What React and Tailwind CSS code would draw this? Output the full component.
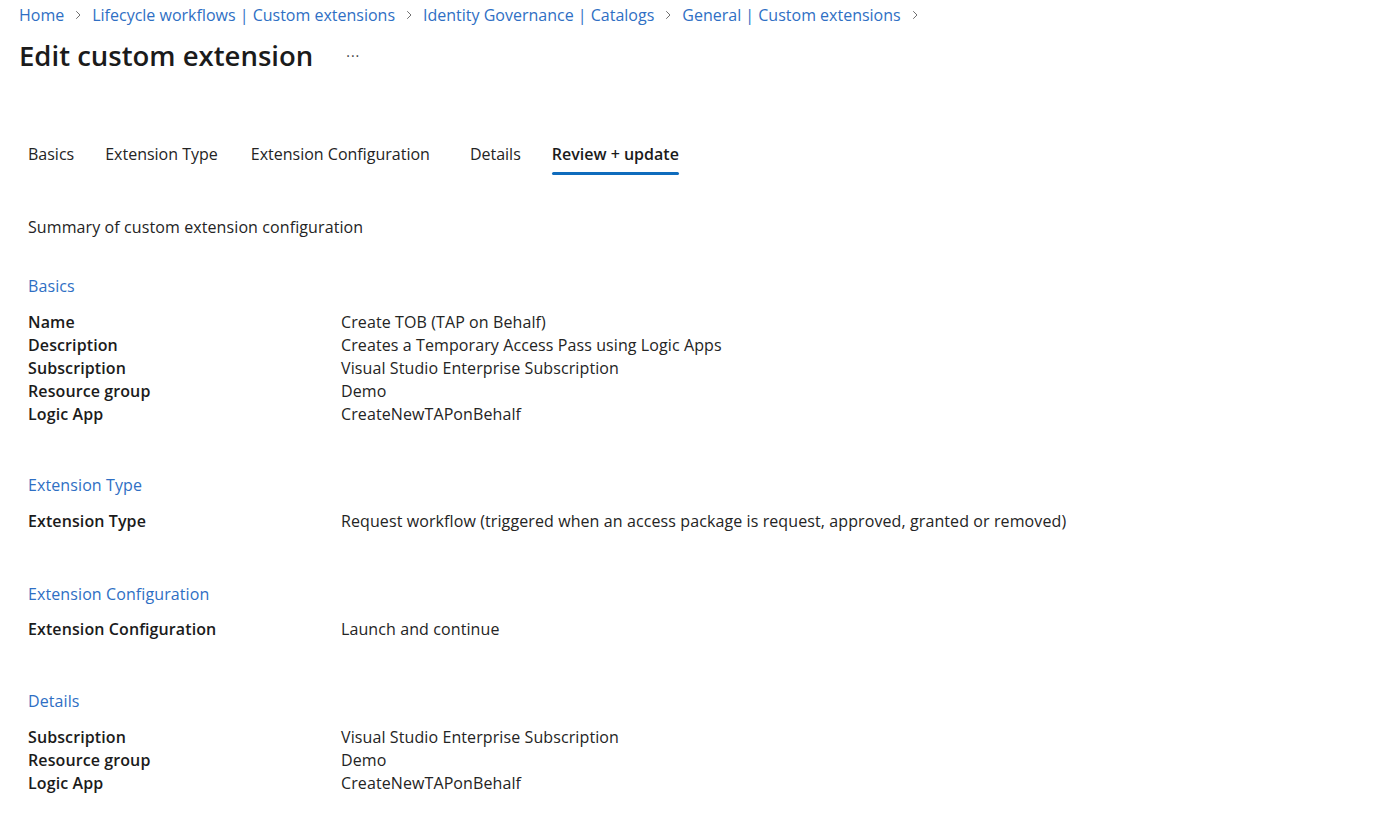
import React from "react";

const font = { fontFamily: '"Open Sans", "Noto Sans", sans-serif' };

function Chevron() {
  return (
    <svg width="12" height="12" viewBox="0 0 12 12" className="mx-[8px] shrink-0" fill="none">
      <path d="M4.5 2.5 L8 6 L4.5 9.5" stroke="#707070" strokeWidth="1" strokeLinecap="round" strokeLinejoin="round" />
    </svg>
  );
}

const crumbs = [
  "Home",
  "Lifecycle workflows | Custom extensions",
  "Identity Governance | Catalogs",
  "General | Custom extensions",
];

const tabs = [
  { label: "Basics", w: "mr-[31px]" },
  { label: "Extension Type", w: "mr-[33px]" },
  { label: "Extension Configuration", w: "mr-[40px]" },
  { label: "Details", w: "mr-[31px]" },
  { label: "Review + update", active: true },
];

function Section({ title, rows, className = "", gap = "mt-[14px]" }) {
  return (
    <div className={className}>
      <div className="text-[16px] leading-[22px] tracking-[0.1px] text-[#2f6fc4]">{title}</div>
      <div className={gap}>
        {rows.map(([k, v]) => (
          <div key={k} className="flex text-[16px] leading-[23px] tracking-[0.1px]">
            <div className="w-[313px] shrink-0 font-semibold text-[#1b1b1b]">{k}</div>
            <div className="text-[#242424]">{v}</div>
          </div>
        ))}
      </div>
    </div>
  );
}

export default function App() {
  return (
    <div className="min-h-[832px] w-full bg-white" style={font}>
      <div className="pl-[19px] pt-[5px]">
        <nav className="flex items-center text-[16px] leading-[20px] text-[#2f6fc4]">
          {crumbs.map((c) => (
            <React.Fragment key={c}>
              <span>{c}</span>
              <Chevron />
            </React.Fragment>
          ))}
        </nav>
        <div className="mt-[13px] flex items-center">
          <h1 className="text-[27.5px] leading-[36px] font-semibold text-[#1b1b1b]">Edit custom extension</h1>
          <span className="ml-[33px] text-[14px] leading-[14px] tracking-[1px] text-[#424242] -mt-[1px]">···</span>
        </div>
      </div>

      <div className="pl-[28px]">
        <div className="mt-[69px] flex">
          {tabs.map((t) => (
            <div key={t.label} className={`${t.w || ""} flex flex-col`}>
              <span className={`text-[16px] leading-[22px] ${t.active ? "font-semibold text-[#1b1b1b]" : "text-[#242424]"}`}>
                {t.label}
              </span>
              <span className={`mt-[7px] h-[3px] rounded-sm ${t.active ? "bg-[#0f6cbd]" : "bg-transparent"}`} />
            </div>
          ))}
        </div>

        <div className="mt-[41px] text-[16px] leading-[22px] tracking-[0.1px] text-[#242424]">Summary of custom extension configuration</div>

        <Section
          className="mt-[37px]"
          title="Basics"
          rows={[
            ["Name", "Create TOB (TAP on Behalf)"],
            ["Description", "Creates a Temporary Access Pass using Logic Apps"],
            ["Subscription", "Visual Studio Enterprise Subscription"],
            ["Resource group", "Demo"],
            ["Logic App", "CreateNewTAPonBehalf"],
          ]}
        />
        <Section
          className="mt-[48px]"
          title="Extension Type"
          rows={[
            ["Extension Type", "Request workflow (triggered when an access package is request, approved, granted or removed)"],
          ]}
        />
        <Section
          className="mt-[50px]"
          gap="mt-[13px]"
          title="Extension Configuration"
          rows={[["Extension Configuration", "Launch and continue"]]}
        />
        <Section
          className="mt-[49px]"
          title="Details"
          rows={[
            ["Subscription", "Visual Studio Enterprise Subscription"],
            ["Resource group", "Demo"],
            ["Logic App", "CreateNewTAPonBehalf"],
          ]}
        />
      </div>
    </div>
  );
}
